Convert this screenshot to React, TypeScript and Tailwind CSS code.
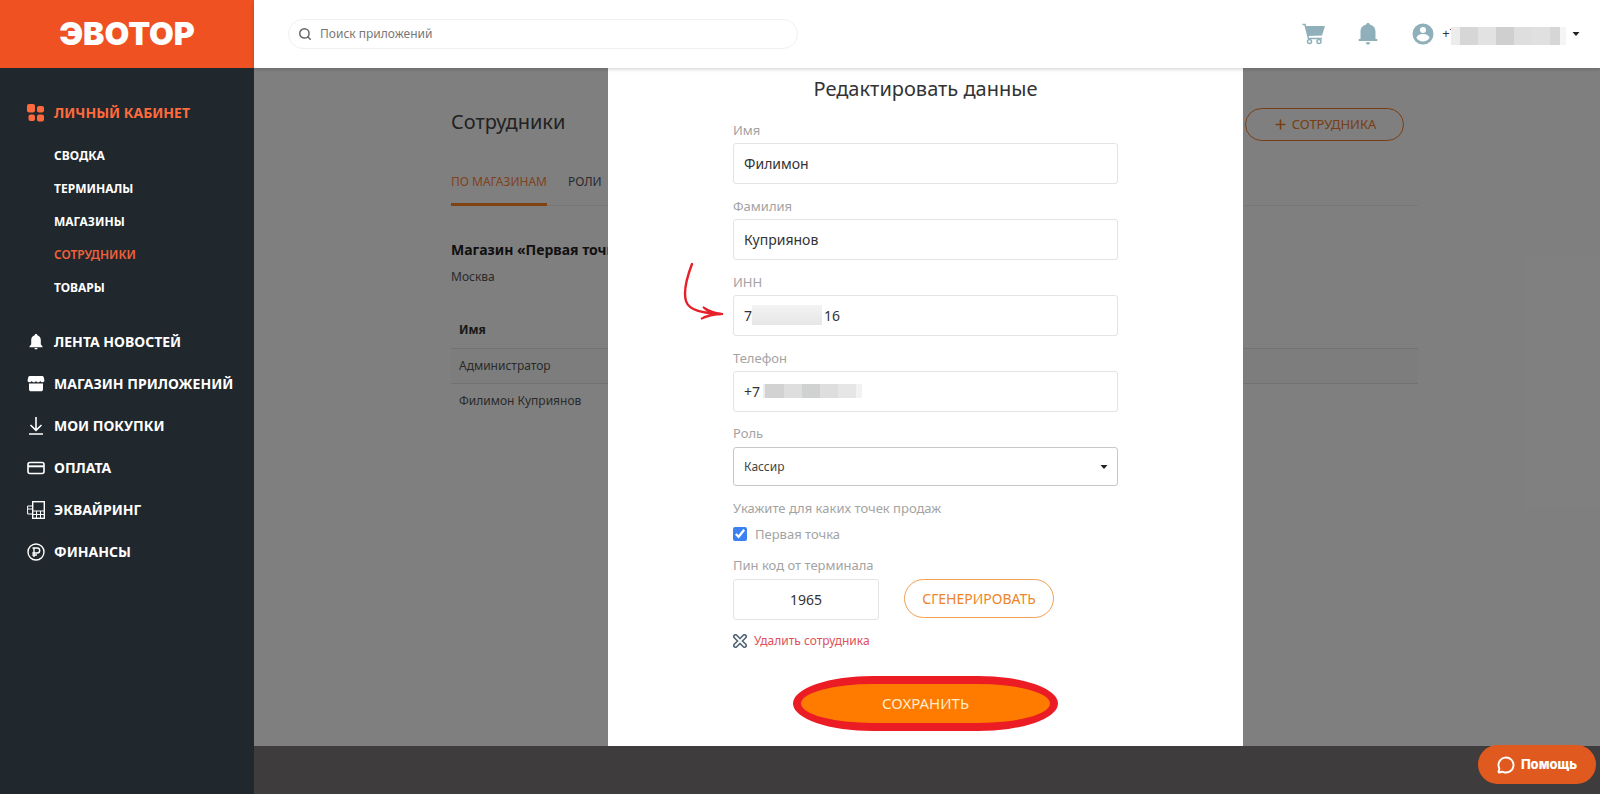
import { MessageCircle, Plus, Search } from "lucide-react"

const MENU = [
  { text: "ЛЕНТА НОВОСТЕЙ", Icon: BellIcon },
  { text: "МАГАЗИН ПРИЛОЖЕНИЙ", Icon: StoreIcon },
  { text: "МОИ ПОКУПКИ", Icon: DownloadIcon },
  { text: "ОПЛАТА", Icon: CardIcon },
  { text: "ЭКВАЙРИНГ", Icon: TerminalIcon },
  { text: "ФИНАНСЫ", Icon: RubleIcon },
]

const SUBMENU = ["СВОДКА", "ТЕРМИНАЛЫ", "МАГАЗИНЫ", "СОТРУДНИКИ", "ТОВАРЫ"]

function GridIcon() {
  return (
    <svg viewBox="0 0 18 18" className="size-[18px] shrink-0" fill="currentColor">
      <rect x="0" y="0" width="8" height="8.5" rx="2" />
      <rect x="10" y="2" width="7" height="6.5" rx="2" />
      <rect x="1.500" y="10.500" width="6.500" height="6.500" rx="2" />
      <rect x="10" y="10.500" width="7" height="7" rx="2" />
    </svg>
  )
}

function BellIcon() {
  return (
    <svg viewBox="0 0 18 18" className="size-[18px] shrink-0" fill="currentColor">
      <path d="M9 1c.8 0 1.300.5 1.300 1.200C12.600 2.800 13.800 4.700 13.800 7v4.200l1.700 2.300v.7h-13v-.7l1.700-2.300V7c0-2.300 1.200-4.200 3.500-4.800C7.700 1.500 8.200 1 9 1z" />
      <path d="M7.300 15h3.400c-.2.900-.9 1.400-1.700 1.400S7.500 15.900 7.300 15z" />
    </svg>
  )
}

function StoreIcon() {
  return (
    <svg viewBox="0 0 18 18" className="size-[18px] shrink-0" fill="currentColor">
      <path d="M3 1h12c1 0 1.500.5 1.800 1.500L17.400 5c.2 1.300-.7 2.300-1.900 2.300-1 0-1.700-.6-2.200-1.300-.5.8-1.200 1.300-2.200 1.300S9.500 6.700 9 6c-.5.800-1.200 1.300-2.200 1.300S5.200 6.700 4.700 6c-.5.800-1.200 1.300-2.200 1.300C1.300 7.300.4 6.300.6 5l.6-2.500C1.500 1.500 2 1 3 1z" />
      <path d="M2 8.500h14V14c0 1.500-.8 2.300-2.200 2.300H4.200C2.800 16.300 2 15.500 2 14z" />
    </svg>
  )
}

function DownloadIcon() {
  return (
    <svg viewBox="0 0 18 18" className="size-[18px] shrink-0" fill="none" stroke="currentColor" strokeWidth="1.600">
      <path d="M9 0v13M3.500 8L9 13.300 14.500 8M2 17h14" />
    </svg>
  )
}

function CardIcon() {
  return (
    <svg viewBox="0 0 18 18" className="size-[18px] shrink-0" fill="none" stroke="currentColor" strokeWidth="1.600">
      <rect x="1" y="3.500" width="16" height="11" rx="2" />
      <path d="M1 7.300h16" strokeWidth="2" />
    </svg>
  )
}

function TerminalIcon() {
  return (
    <svg viewBox="0 0 18 18" className="size-[18px] shrink-0" fill="none" stroke="currentColor">
      <rect x="5.700" y=".7" width="11.600" height="16.600" strokeWidth="1.400" />
      <path d="M5.500 10h12M9.500 10v7M13.500 10v7M5.500 13.500h12M5.500 5H.6v8h4.900M.6 8h4.900" />
    </svg>
  )
}

function RubleIcon() {
  return (
    <svg viewBox="0 0 18 18" className="size-[18px] shrink-0" fill="none" stroke="currentColor" strokeWidth="1.400">
      <circle cx="9" cy="9" r="8" />
      <path d="M7 14V5h3.200a2.500 2.500 0 0 1 0 5H5.300M5.300 12H10M5.500 5H7" />
    </svg>
  )
}

function CartIcon() {
  return (
    <svg viewBox="0 0 24 22" className="h-[22px] w-6" fill="none" stroke="currentColor" strokeWidth="1.500">
      <path d="M3.500 3h19.500L20 12.500l-14 .5z" fill="currentColor" stroke="none" />
      <path d="M.5 1.500H3L6.500 15.500H20M7.500 15.500v1M17 15.500v1" />
      <circle cx="7.500" cy="18.500" r="2" />
      <circle cx="17" cy="18.500" r="2" />
    </svg>
  )
}

function HeaderBellIcon() {
  return (
    <svg viewBox="0 0 20 22" className="h-[22px] w-5" fill="currentColor">
      <path d="M10 0c1.100 0 1.700.6 1.800 1.400C15.500 2.300 17.500 5 17.500 8.500V16h1c.7 0 .9.500.9.900v1.200H.6v-1.200c0-.4.200-.9.900-.9h1V8.500C2.500 5 4.500 2.300 8.200 1.400 8.300.6 8.900 0 10 0z" />
      <path d="M7.800 19.200h4.400c-.1 1.400-1 2.300-2.200 2.300s-2.100-.9-2.200-2.300z" />
    </svg>
  )
}

function UserIcon() {
  return (
    <svg viewBox="0 0 22 22" className="size-[22px]">
      <circle cx="11" cy="11" r="10.500" fill="currentColor" />
      <circle cx="11" cy="7" r="3" fill="#fff" />
      <path d="M4.500 15c.4-2.700 3.600-4 6.500-4s6.100 1.300 6.500 4c-1.500 2.300-3.700 3.500-6.500 3.500S6 17.300 4.500 15z" fill="#fff" />
    </svg>
  )
}

function DeleteIcon() {
  return (
    <svg viewBox="0 0 14 14" className="size-[14px]" fill="none" strokeLinecap="round">
      <path d="M2.500 2.500l9 9M11.500 2.500l-9 9" stroke="#4f6475" strokeWidth="5" />
      <path d="M2.500 2.500l9 9M11.500 2.500l-9 9" stroke="#fff" strokeWidth="1.800" />
    </svg>
  )
}

function Caret() {
  return (
    <svg viewBox="0 0 8 4" className="h-1 w-2 shrink-0 text-[#222]" fill="currentColor">
      <path d="M.5 0h7L4 4z" />
    </svg>
  )
}

function Sidebar() {
  return (
    <aside className="flex w-[254px] shrink-0 flex-col bg-[#20272d] text-white">
      <a href="#" className="flex h-[68px] items-center justify-center bg-[#f05123] font-['Inter'] text-[32px] leading-none font-black">
        ЭВОТОР
      </a>
      <nav className="flex flex-col pt-8 pl-[27px] text-sm font-bold whitespace-nowrap">
        <a href="#" className="flex h-[26px] items-center gap-[9px] text-[#ff6a3c]">
          <GridIcon />
          ЛИЧНЫЙ КАБИНЕТ
        </a>
        <ul className="flex flex-col pt-[13px] pb-[17px] text-xs">
          {SUBMENU.map((text) => (
            <li key={text} className="flex h-[33px] items-center pl-[27px]">
              <a href="#" className={text === "СОТРУДНИКИ" ? "font-semibold text-[#f0603a]" : ""}>
                {text}
              </a>
            </li>
          ))}
        </ul>
        {MENU.map(({ text, Icon }) => (
          <a key={text} href="#" className="flex h-[42px] items-center gap-[9px]">
            <Icon />
            {text}
          </a>
        ))}
      </nav>
    </aside>
  )
}

function Header() {
  return (
    <header className="z-10 flex h-[68px] items-center bg-white pr-5 pl-[34px] shadow-[0_1px_4px_rgba(0,0,0,0.2)]">
      <label className="flex h-[30px] w-[510px] items-center gap-2 rounded-full border border-[#f0f0f0] px-[9px]">
        <Search className="size-[14px] shrink-0 text-[#666]" strokeWidth={2.5} />
        <input
          type="text"
          aria-label="Поиск приложений"
          placeholder="Поиск приложений"
          className="w-full text-xs outline-none placeholder:text-[#777]"
        />
      </label>
      <div className="ml-auto flex items-center text-[#8fb0bb]">
        <button aria-label="Корзина" className="mr-8">
          <CartIcon />
        </button>
        <button aria-label="Уведомления" className="mr-[34px]">
          <HeaderBellIcon />
        </button>
        <button className="flex items-center">
          <UserIcon />
          <span className="relative ml-2 flex items-center">
            <span className="text-[13px] text-[#333]">+7</span>
            <span className="-ml-[6px] mt-1 flex h-[18px]">
              <span className="w-[9px] bg-[#ececec]" />
              <span className="w-[18px] bg-[#d6d6d6]" />
              <span className="w-[18px] bg-[#e2e2e2]" />
              <span className="w-[18px] bg-[#cfcfcf]" />
              <span className="w-[18px] bg-[#dedede]" />
              <span className="w-[18px] bg-[#e0e0e0]" />
              <span className="w-[10px] bg-[#d6d6d6]" />
              <span className="w-[6px] bg-[#f5f5f5]" />
            </span>
          </span>
          <span className="ml-[6px]">
            <Caret />
          </span>
        </button>
      </div>
    </header>
  )
}

function Employees() {
  return (
    <section className="col-start-1 row-start-1 min-w-0 pr-[182px] pl-[197px] text-[#555]">
      <div className="flex items-center justify-between pt-10 pr-[14px]">
        <h1 className="pb-[5px] text-xl leading-7 text-[#444]">Сотрудники</h1>
        <button className="flex h-[33px] w-[159px] items-center justify-center gap-1 rounded-full border border-[#ef7d2b] text-[13px] text-[#ef7d2b]">
          <Plus className="size-[15px]" strokeWidth={2.5} />
          СОТРУДНИКА
        </button>
      </div>
      <div className="mt-6 flex h-[41px] items-center gap-[21px] border-b border-[#eee] text-xs">
        <button className="h-[41px] border-b-3 border-[#ff8420] pb-1 text-[#ff8440]">ПО МАГАЗИНАМ</button>
        <button className="h-[41px] border-b-3 border-transparent pb-1">РОЛИ</button>
      </div>
      <h2 className="mt-8 text-sm leading-6 font-bold text-[#222]">Магазин «Первая точка»</h2>
      <p className="mt-[3px] text-xs leading-6">Москва</p>
      <table className="mt-6 w-full text-left text-xs">
        <thead>
          <tr className="h-[35px]">
            <th className="px-2 text-[#333]">Имя</th>
          </tr>
        </thead>
        <tbody>
          <tr className="h-[35px] border-y border-[#e4e4e4] bg-[#fafafa]">
            <td className="px-2">Администратор</td>
          </tr>
          <tr className="h-[35px]">
            <td className="px-2">Филимон Куприянов</td>
          </tr>
        </tbody>
      </table>
    </section>
  )
}

function Field({ id, label, value, children }: { id: string; label: string; value: string; children?: React.ReactNode }) {
  return (
    <div className="mb-[11px] flex flex-col">
      <label htmlFor={id} className="h-6 text-[13px] leading-[22px] text-[#a3a3a3]">
        {label}
      </label>
      <div className="relative">
        <input
          id={id}
          type="text"
          defaultValue={value}
          className="h-[41px] w-full rounded-[3px] border border-[#e3e3e3] px-[10px] text-sm text-[#333]"
        />
        {children}
      </div>
    </div>
  )
}

function EditDialog() {
  return (
    <form className="relative flex w-[635px] flex-col bg-white px-[125px] pb-[15px] text-[#333]">
      <h2 className="pt-[5px] text-center text-xl leading-8">Редактировать данные</h2>
      <div className="mt-[14px]">
        <Field id="name" label="Имя" value="Филимон" />
        <Field id="surname" label="Фамилия" value="Куприянов" />
        <Field id="inn" label="ИНН" value={"7" + "\u2007".repeat(9) + "16"}>
          <span className="absolute top-[10px] left-[19px] h-5 w-[70px] bg-linear-to-b from-[#f3f3f3] to-[#e6e6e6]" />
          <svg viewBox="0 0 42 58" className="absolute -top-[33px] -left-[50px] h-[58px] w-[42px]" fill="none" stroke="#e6202a" strokeWidth="2.400" strokeLinecap="round">
            <path d="M9 2C4 15 0 29 3 39C6 49 21 51 37 52" />
            <path d="M20 45C26 49 32 51 40 52C31 52.500 24 54 18 57C23 53.500 26 53 30 52C26 50 23 48 20 45z" fill="#e6202a" strokeWidth="1.800" />
          </svg>
        </Field>
        <Field id="phone" label="Телефон" value="+7">
          <span className="absolute top-[13px] left-[30px] flex h-[14px]">
            <span className="w-[2px] bg-[#ededed]" />
            <span className="w-[19px] bg-[#d2d2d2]" />
            <span className="w-[18px] bg-[#dedede]" />
            <span className="w-[18px] bg-[#d0d2d2]" />
            <span className="w-[18px] bg-[#dedede]" />
            <span className="w-[18px] bg-[#e6e6e6]" />
            <span className="w-[6px] bg-[#f2f2f2]" />
          </span>
        </Field>
      </div>
      <label htmlFor="role" className="h-6 text-[13px] leading-5 text-[#a3a3a3]">
        Роль
      </label>
      <div className="relative">
        <select id="role" className="h-[39px] w-full appearance-none rounded-[3px] border border-[#c8c8c8] px-[10px] text-xs text-[#444]">
          <option>Кассир</option>
        </select>
        <span className="pointer-events-none absolute inset-y-0 right-[10px] flex items-center">
          <Caret />
        </span>
      </div>
      <p className="mt-[10px] text-[13px] leading-6 text-[#a3a3a3]">Укажите для каких точек продаж</p>
      <label className="mt-[2px] flex items-center gap-2 text-[13px] leading-6 text-[#a3a3a3]">
        <input type="checkbox" defaultChecked className="size-[14px] accent-[#3b82f0]" />
        Первая точка
      </label>
      <label htmlFor="pin" className="mt-[7px] mb-[2px] text-[13px] leading-6 text-[#a3a3a3]">
        Пин код от терминала
      </label>
      <div className="flex gap-[25px]">
        <input
          id="pin"
          type="text"
          defaultValue="1965"
          className="h-[41px] w-[146px] rounded-[3px] border border-[#e3e3e3] text-center text-sm"
        />
        <button type="button" className="h-[39px] w-[150px] rounded-full border border-[#f3a050] text-sm text-[#ee8428]">
          СГЕНЕРИРОВАТЬ
        </button>
      </div>
      <button type="button" className="mt-[9px] flex items-center gap-[7px] self-start text-xs leading-6 text-[#e0505a]">
        <DeleteIcon />
        Удалить сотрудника
      </button>
      <button
        type="submit"
        className="mt-[23px] h-[55px] w-[265px] self-center rounded-[80px/50%] border-8 border-[#ec1c24] bg-[#ff7b00] text-[15px] text-[#ffeccc]"
      >
        СОХРАНИТЬ
      </button>
    </form>
  )
}

export default function App() {
  return (
    <div className="flex min-h-screen font-['Noto_Sans',sans-serif]">
      <Sidebar />
      <div className="flex min-w-0 flex-1 flex-col">
        <Header />
        <main className="grid">
          <Employees />
          <div className="relative col-start-1 row-start-1 flex justify-center bg-black/50 pr-[3px]">
            <EditDialog />
          </div>
        </main>
        <footer className="flex-1 bg-[#3f3c3d]" />
      </div>
      <button className="fixed right-1 bottom-[10px] z-20 flex h-[39px] w-[118px] items-center justify-center gap-[6px] rounded-full bg-[#e05a20] font-['Inter'] text-[13px] font-extrabold text-white">
        <MessageCircle className="size-[18px]" strokeWidth={2.5} />
        Помощь
      </button>
    </div>
  )
}
